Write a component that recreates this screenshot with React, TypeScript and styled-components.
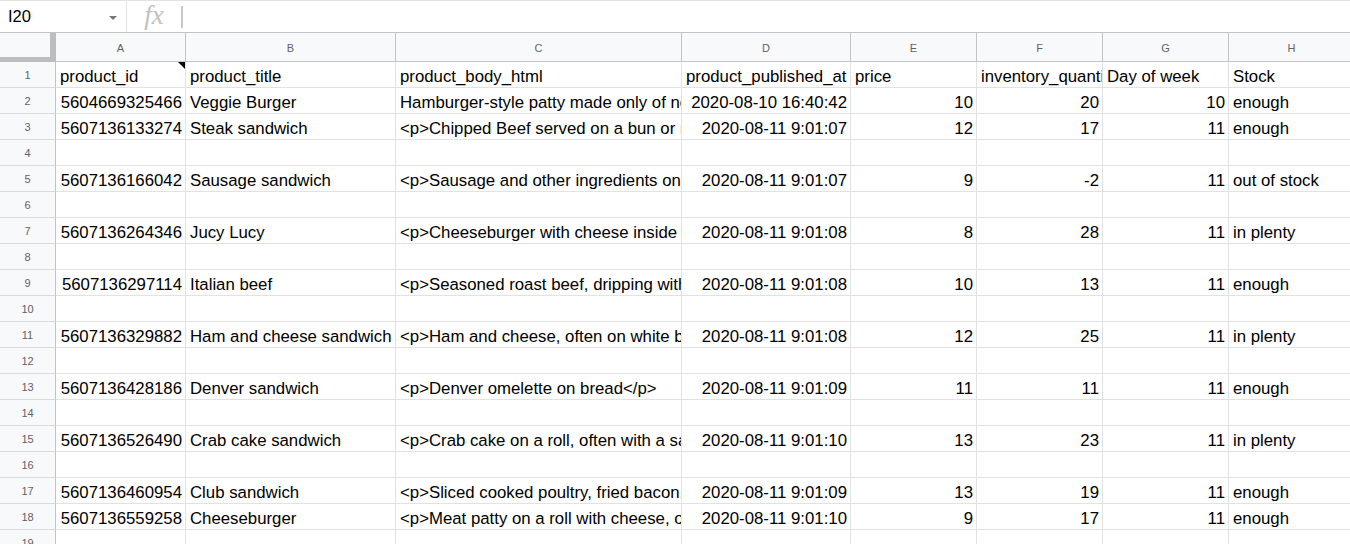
import React from "react";
import styled, { createGlobalStyle } from "styled-components";

const GlobalStyle = createGlobalStyle`
  html, body {
    margin: 0;
    padding: 0;
    background: #ffffff;
    font-family: "Liberation Sans", Arial, sans-serif;
  }
  * {
    box-sizing: border-box;
  }
`;

const COLS = [
  { letter: "A", width: 130 },
  { letter: "B", width: 210 },
  { letter: "C", width: 286 },
  { letter: "D", width: 169 },
  { letter: "E", width: 126 },
  { letter: "F", width: 126 },
  { letter: "G", width: 126 },
  { letter: "H", width: 126 },
];

// columns holding numbers / dates get right-aligned in data rows
const RIGHT_COLS = [0, 3, 4, 5, 6];

const HEADER = [
  "product_id",
  "product_title",
  "product_body_html",
  "product_published_at",
  "price",
  "inventory_quantity",
  "Day of week",
  "Stock",
];

const ROWS: (string[] | null)[] = [
  ["5604669325466", "Veggie Burger", "Hamburger-style patty made only of non-meat ingredients", "2020-08-10 16:40:42", "10", "20", "10", "enough"],
  ["5607136133274", "Steak sandwich", "<p>Chipped Beef served on a bun or roll</p>", "2020-08-11 9:01:07", "12", "17", "11", "enough"],
  null,
  ["5607136166042", "Sausage sandwich", "<p>Sausage and other ingredients on a bun</p>", "2020-08-11 9:01:07", "9", "-2", "11", "out of stock"],
  null,
  ["5607136264346", "Jucy Lucy", "<p>Cheeseburger with cheese inside the patty</p>", "2020-08-11 9:01:08", "8", "28", "11", "in plenty"],
  null,
  ["5607136297114", "Italian beef", "<p>Seasoned roast beef, dripping with jus</p>", "2020-08-11 9:01:08", "10", "13", "11", "enough"],
  null,
  ["5607136329882", "Ham and cheese sandwich", "<p>Ham and cheese, often on white bread</p>", "2020-08-11 9:01:08", "12", "25", "11", "in plenty"],
  null,
  ["5607136428186", "Denver sandwich", "<p>Denver omelette on bread</p>", "2020-08-11 9:01:09", "11", "11", "11", "enough"],
  null,
  ["5607136526490", "Crab cake sandwich", "<p>Crab cake on a roll, often with a sauce</p>", "2020-08-11 9:01:10", "13", "23", "11", "in plenty"],
  null,
  ["5607136460954", "Club sandwich", "<p>Sliced cooked poultry, fried bacon, lettuce</p>", "2020-08-11 9:01:09", "13", "19", "11", "enough"],
  ["5607136559258", "Cheeseburger", "<p>Meat patty on a roll with cheese, often with toppings</p>", "2020-08-11 9:01:10", "9", "17", "11", "enough"],
  null,
  null,
];

const Page = styled.div`
  width: 1350px;
  height: 544px;
  overflow: hidden;
  background: #fff;
`;

const FormulaBar = styled.div`
  display: flex;
  align-items: stretch;
  height: 33px;
  border-top: 1px solid #e3e3e3;
  border-bottom: 1px solid #c4c4c4;
`;

const NameBox = styled.div`
  width: 127px;
  display: flex;
  align-items: center;
  justify-content: space-between;
  padding: 0 9px 0 8px;
  border-right: 1px solid #e3e3e3;
  font-size: 16.5px;
  color: #000;
`;

const Caret = styled.span`
  width: 0;
  height: 0;
  border-left: 4px solid transparent;
  border-right: 4px solid transparent;
  border-top: 4px solid #777;
  margin-top: 2px;
`;

const FxLabel = styled.div`
  width: 54px;
  display: flex;
  align-items: center;
  justify-content: center;
  font-family: "Liberation Serif", "Times New Roman", serif;
  font-style: italic;
  font-size: 27px;
  color: #c2c2c2;
  padding-bottom: 3px;
`;

const Divider = styled.div`
  width: 2px;
  align-self: center;
  height: 22px;
  background: #c9c9c9;
`;

const Grid = styled.div`
  display: grid;
  grid-template-columns: 56px ${COLS.map((c) => `${c.width}px`).join(" ")};
  width: max-content;
`;

const Corner = styled.div`
  height: 29px;
  background: #f8f9fa;
  box-shadow: inset -6px -5px 0 #bdbdbd;
`;

const ColHead = styled.div`
  height: 29px;
  background: #f8f9fa;
  border-right: 1px solid #c4c4c4;
  border-bottom: 1px solid #c4c4c4;
  display: flex;
  align-items: center;
  justify-content: center;
  font-size: 11px;
  color: #5f6368;
  padding-top: 1px;
`;

const RowHead = styled.div`
  height: 26px;
  background: #f8f9fa;
  border-right: 1px solid #c4c4c4;
  border-bottom: 1px solid #dadada;
  display: flex;
  align-items: center;
  justify-content: center;
  font-size: 11px;
  color: #5f6368;
`;

const Cell = styled.div<{ $right?: boolean }>`
  position: relative;
  height: 26px;
  border-right: 1px solid #e2e2e2;
  border-bottom: 1px solid #e2e2e2;
  display: flex;
  align-items: flex-end;
  justify-content: ${({ $right }) => ($right ? "flex-end" : "flex-start")};
  padding: ${({ $right }) => ($right ? "0 3px 1px 0" : "0 0 1px 4px")};
  overflow: hidden;
  white-space: nowrap;
  font-size: 16.8px;
  line-height: 19px;
  color: #000;
`;

const NoteMark = styled.span`
  position: absolute;
  top: 0;
  right: 0;
  width: 0;
  height: 0;
  border-top: 7px solid #000;
  border-left: 7px solid transparent;
`;

export default function App() {
  return (
    <Page>
      <GlobalStyle />
      <FormulaBar>
        <NameBox>
          I20
          <Caret />
        </NameBox>
        <FxLabel>fx</FxLabel>
        <Divider />
      </FormulaBar>

      <Grid>
        <Corner />
        {COLS.map((c) => (
          <ColHead key={c.letter}>{c.letter}</ColHead>
        ))}

        <RowHead>1</RowHead>
        {HEADER.map((h, i) => (
          <Cell key={h}>
            {h}
            {i === 0 && <NoteMark />}
          </Cell>
        ))}

        {ROWS.map((row, r) => (
          <React.Fragment key={r}>
            <RowHead>{r + 2}</RowHead>
            {COLS.map((c, i) => (
              <Cell key={c.letter} $right={RIGHT_COLS.includes(i)}>
                {row ? row[i] : ""}
              </Cell>
            ))}
          </React.Fragment>
        ))}
      </Grid>
    </Page>
  );
}
